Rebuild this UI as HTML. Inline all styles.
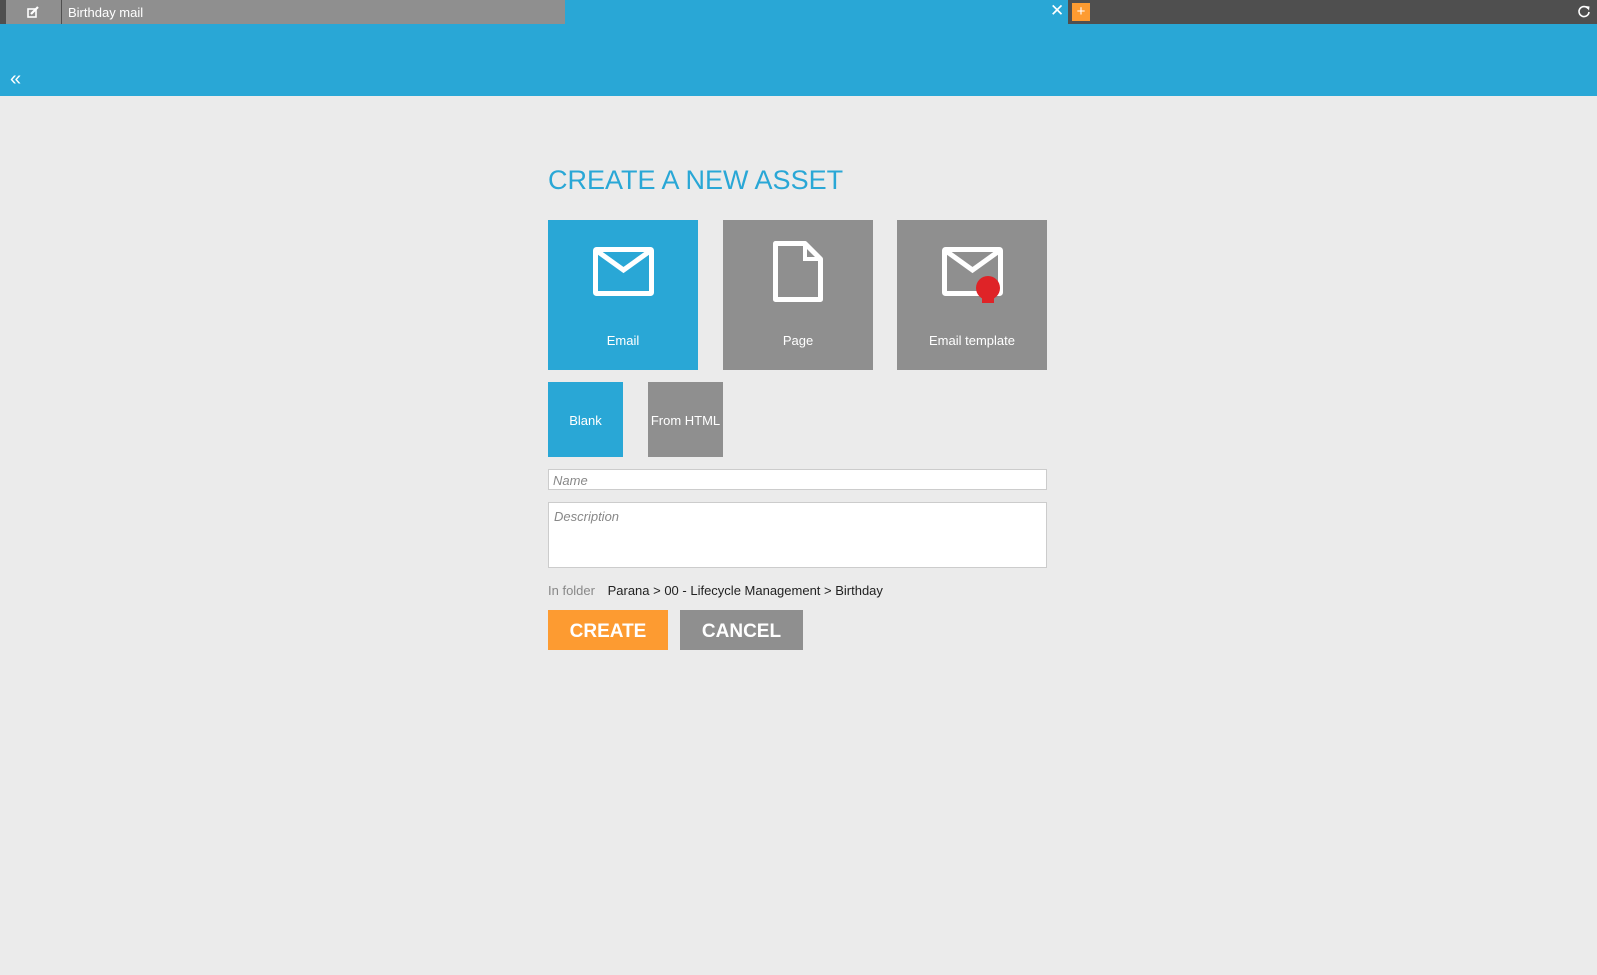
<!DOCTYPE html>
<html><head><style>
*{margin:0;padding:0;box-sizing:border-box}
body{width:1597px;height:975px;background:#ebebeb;font-family:"Liberation Sans",sans-serif;position:relative;overflow:hidden}
.a{position:absolute}
.tile{position:absolute;color:#fff;font-size:13px;text-align:center}
</style></head><body>
<div class="a" style="left:0;top:0;width:1597px;height:24px;background:#4f4f4f"></div>
<div class="a" style="left:6px;top:0;width:55px;height:24px;background:#8f8f8f"></div>
<svg class="a" style="left:27px;top:6px" width="13" height="12" viewBox="0 0 13 12"><rect x="1" y="3" width="8" height="8" fill="none" stroke="#fff" stroke-width="1.6"/><path d="M4 8 L11 1" stroke="#fff" stroke-width="2.2"/></svg>
<div class="a" style="left:62px;top:0;width:503px;height:24px;background:#8f8f8f;color:#fff;font-size:13px;line-height:26px;padding-left:6px">Birthday mail</div>
<div class="a" style="left:565px;top:0;width:503px;height:24px;background:#29a7d6"></div>
<div class="a" style="left:1050px;top:1px;color:#fff;font-size:17px">✕</div>
<div class="a" style="left:1072px;top:3px;width:18px;height:18px;background:#fd9b31;color:#fff;font-size:15px;line-height:18px;text-align:center">+</div>
<svg class="a" style="left:1577px;top:5px" width="14" height="14" viewBox="0 0 14 14"><path d="M11 3.5 A5 5 0 1 0 12 7" fill="none" stroke="#fff" stroke-width="1.6"/><path d="M8.5 1 L12.5 1.5 L12 5.5 Z" fill="#fff"/></svg>
<div class="a" style="left:0;top:24px;width:1597px;height:72px;background:#29a7d6"></div>
<div class="a" style="left:10px;top:68px;color:#fff;font-size:20px">«</div>
<div class="a" style="left:548px;top:165px;color:#29a7d6;font-size:27px">CREATE A NEW ASSET</div>
<div class="tile" style="left:548px;top:220px;width:150px;height:150px;background:#29a7d6">
<svg class="a" style="left:45px;top:27px" width="61" height="49" viewBox="0 0 61 49"><rect x="2.5" y="2.5" width="56" height="44" rx="1" fill="none" stroke="#fff" stroke-width="5"/><path d="M4 4 L30.5 23 L57 4" fill="none" stroke="#fff" stroke-width="5"/></svg>
<div class="a" style="left:0;width:150px;top:113px">Email</div></div>
<div class="tile" style="left:723px;top:220px;width:150px;height:150px;background:#8f8f8f">
<svg class="a" style="left:50px;top:21px" width="50" height="61" viewBox="0 0 50 61"><path d="M2.5 2.5 H32 L47.5 18 V58.5 H2.5 Z" fill="none" stroke="#fff" stroke-width="5" stroke-linejoin="round"/><path d="M32 2.5 V18 H47.5" fill="none" stroke="#fff" stroke-width="4"/></svg>
<div class="a" style="left:0;width:150px;top:113px">Page</div></div>
<div class="tile" style="left:897px;top:220px;width:150px;height:150px;background:#8f8f8f">
<svg class="a" style="left:45px;top:27px" width="64" height="56" viewBox="0 0 64 56"><rect x="2.5" y="2.5" width="56" height="44" rx="1" fill="none" stroke="#fff" stroke-width="5"/><path d="M4 4 L30.5 23 L57 4" fill="none" stroke="#fff" stroke-width="5"/><circle cx="46" cy="41" r="12" fill="#df2327"/><rect x="40" y="48" width="12" height="8" fill="#df2327"/></svg>
<div class="a" style="left:0;width:150px;top:113px">Email template</div></div>
<div class="tile" style="left:548px;top:382px;width:75px;height:75px;background:#29a7d6;line-height:77px">Blank</div>
<div class="tile" style="left:648px;top:382px;width:75px;height:75px;background:#8f8f8f;line-height:77px">From HTML</div>
<div class="a" style="left:548px;top:469px;width:499px;height:21px;background:#fff;border:1px solid #ccc;color:#888;font-style:italic;font-size:13px;line-height:21px;padding-left:4px">Name</div>
<div class="a" style="left:548px;top:502px;width:499px;height:66px;background:#fff;border:1px solid #ccc;color:#888;font-style:italic;font-size:13px;padding:6px 0 0 5px">Description</div>
<div class="a" style="left:548px;top:583px;font-size:13px;color:#888">In folder <span style="color:#222;margin-left:9px">Parana &gt; 00 - Lifecycle Management &gt; Birthday</span></div>
<div class="a" style="left:548px;top:610px;width:120px;height:40px;background:#fd9b31;color:#fff;font-weight:bold;font-size:19px;line-height:44px;text-align:center">CREATE</div>
<div class="a" style="left:680px;top:610px;width:123px;height:40px;background:#8f8f8f;color:#fff;font-weight:bold;font-size:19px;line-height:44px;text-align:center">CANCEL</div>
</body></html>
